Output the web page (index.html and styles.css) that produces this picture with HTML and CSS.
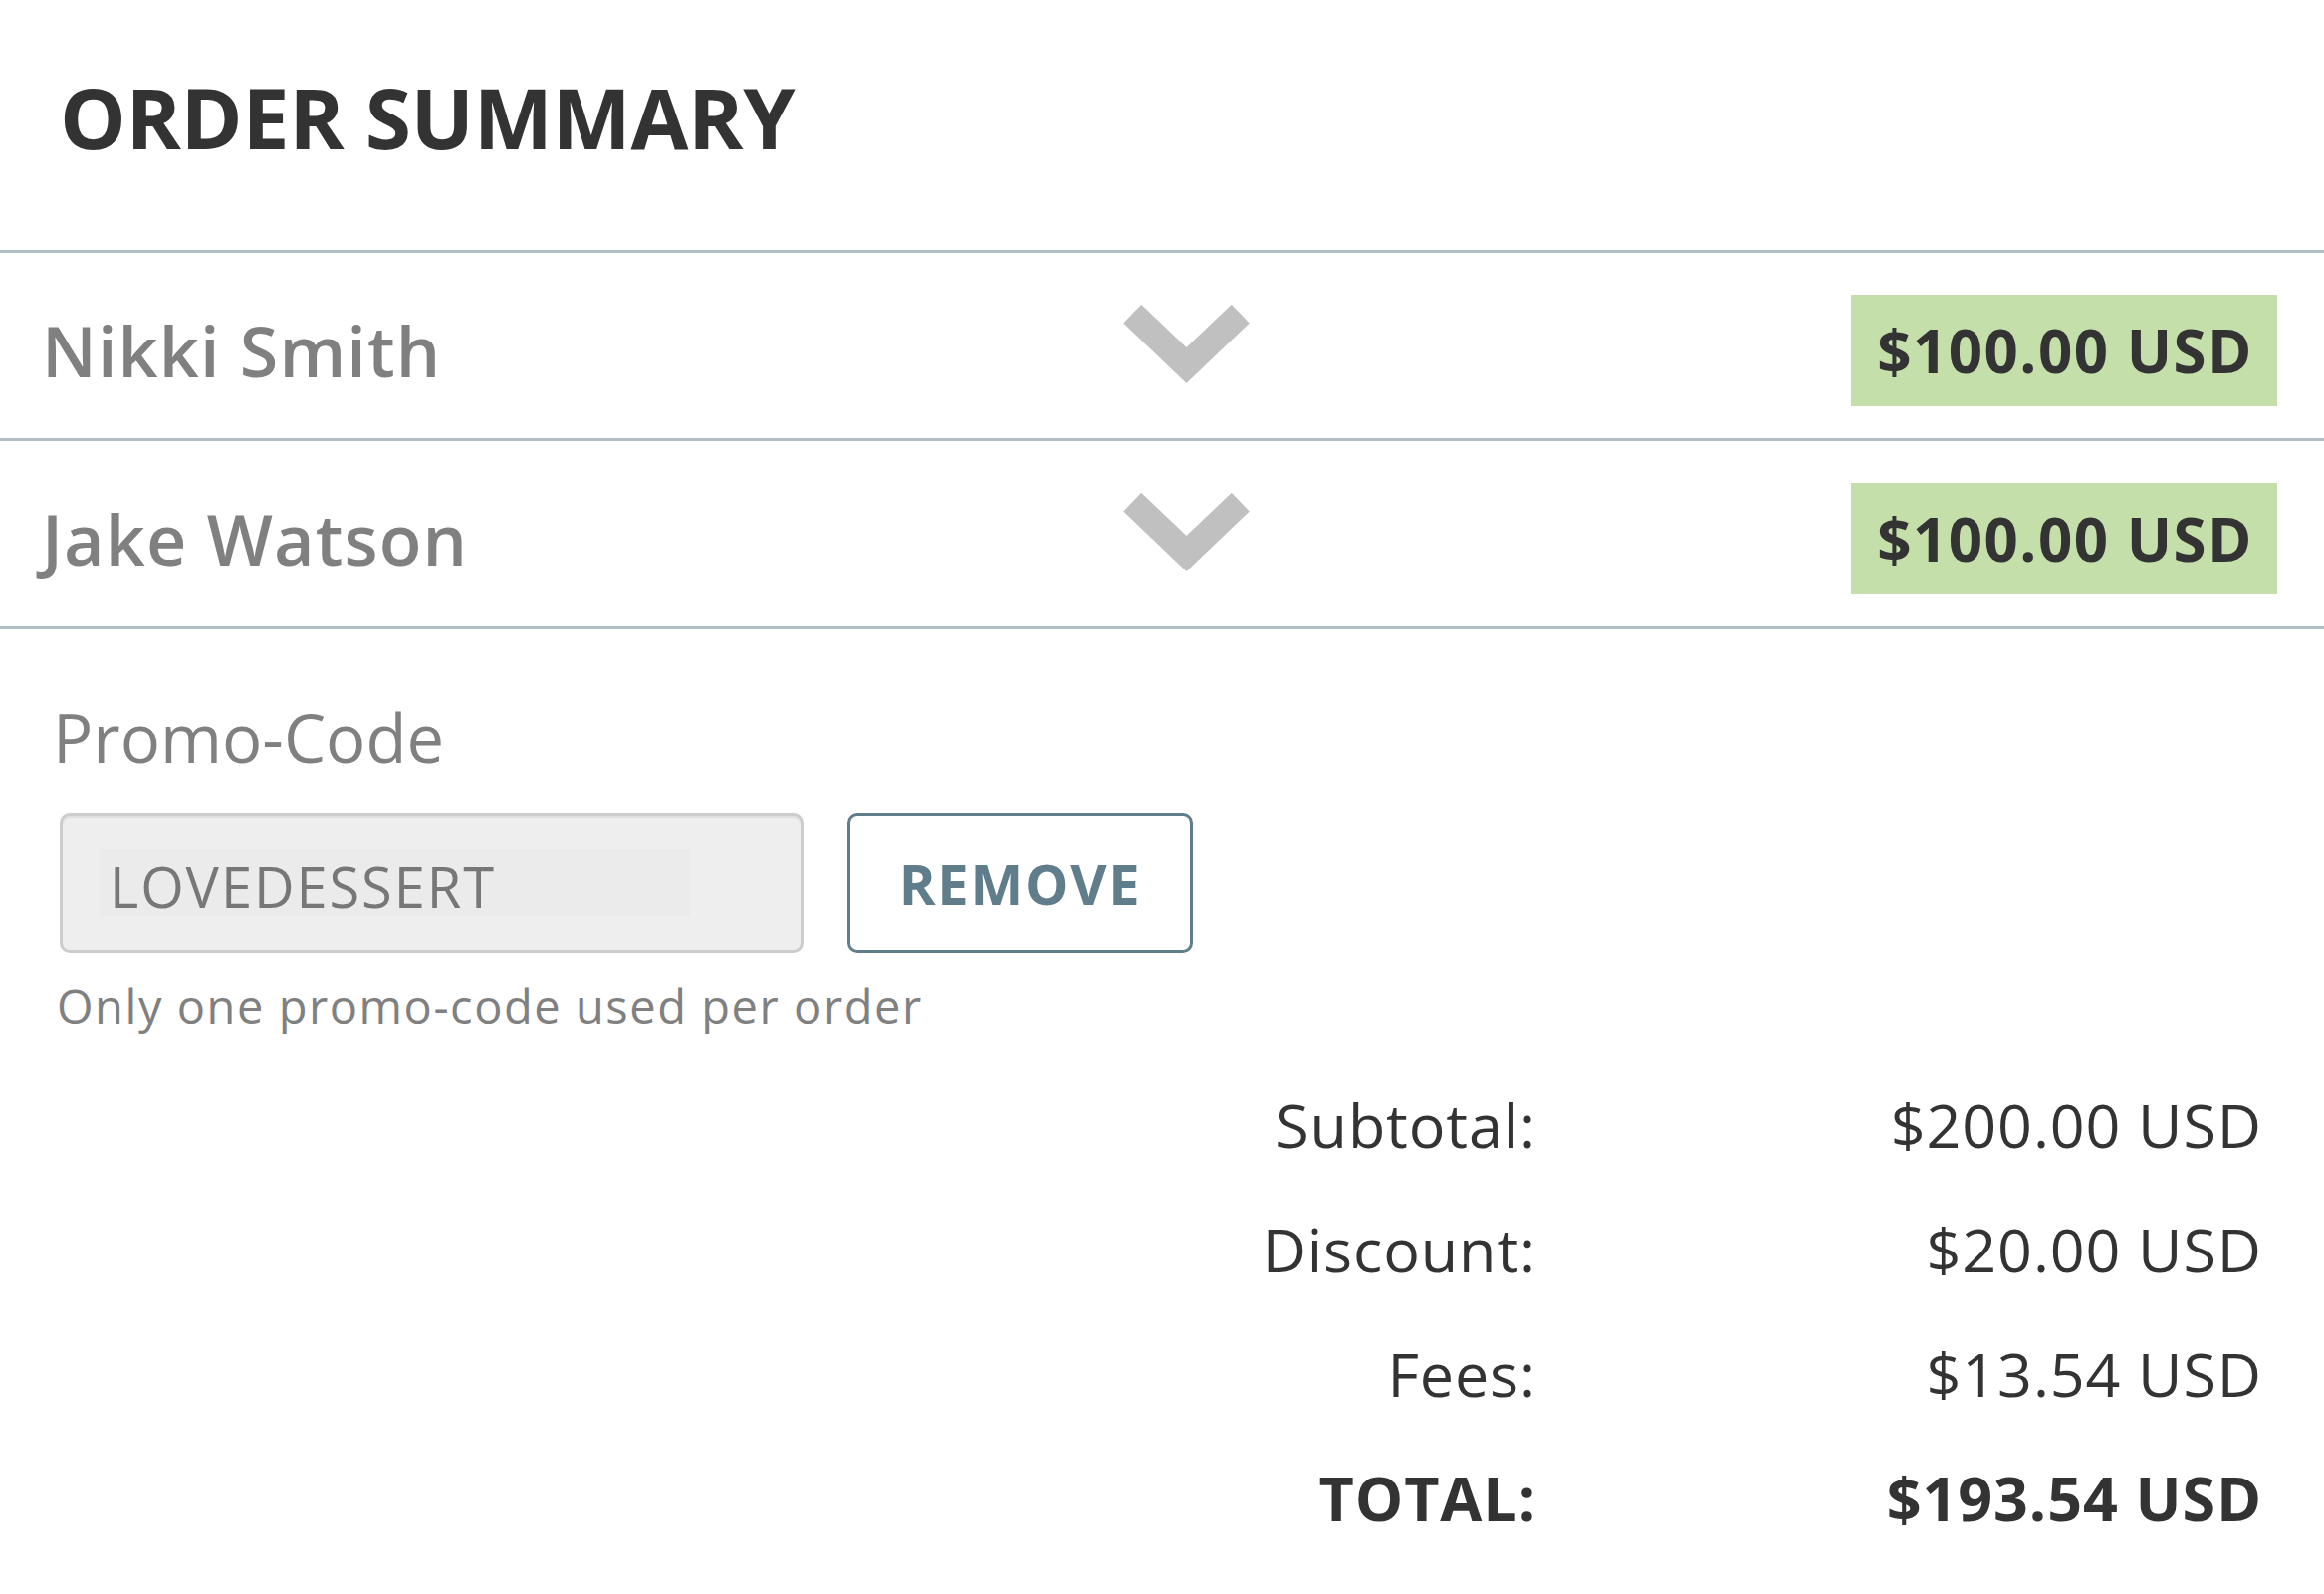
FILE: index.html
```
<!DOCTYPE html>
<html lang="en">
<head>
    <meta charset="UTF-8">
    <title>Order Summary</title>
    <link rel="stylesheet" href="styles.css">
</head>
<body>
<header class="summary-header">
    <h1>ORDER SUMMARY</h1>
</header>

<section class="attendees">
    <div class="attendee">
        <span class="attendee-name">Nikki Smith</span>
        <svg class="chevron" viewBox="0 0 127 80" width="127" height="80">
            <polyline points="9.2,9.2 63.5,61 117.8,9.2"></polyline>
        </svg>
        <span class="price-tag">$100.00 USD</span>
    </div>
    <div class="attendee">
        <span class="attendee-name">Jake Watson</span>
        <svg class="chevron" viewBox="0 0 127 80" width="127" height="80">
            <polyline points="9.2,9.2 63.5,61 117.8,9.2"></polyline>
        </svg>
        <span class="price-tag">$100.00 USD</span>
    </div>
</section>

<section class="promo">
    <label class="promo-label" for="promoInput">Promo-Code</label>
    <div class="promo-row">
        <div class="promo-field">
            <input type="text" id="promoInput" value="LOVEDESSERT" readonly>
        </div>
        <button class="remove-button">REMOVE</button>
    </div>
    <p class="promo-note">Only one promo-code used per order</p>
</section>

<section class="totals">
    <span class="totals-label">Subtotal:</span>
    <span class="totals-value">$200.00 USD</span>
    <span class="totals-label">Discount:</span>
    <span class="totals-value">$20.00 USD</span>
    <span class="totals-label">Fees:</span>
    <span class="totals-value">$13.54 USD</span>
    <span class="totals-label total">TOTAL:</span>
    <span class="totals-value total">$193.54 USD</span>
</section>
</body>
</html>
```

FILE: styles.css
```
body {
    margin: 0;
    padding: 0;
    background-color: #fff;
    font-family: "Open Sans", "Liberation Sans", sans-serif;
    color: #333;
}

.summary-header {
    padding: 60px 58px 76px 60px;
    border-bottom: 3px solid #b0bec5;
}

.summary-header h1 {
    margin: 0;
    font-size: 84px;
    font-weight: 700;
    line-height: normal;
    letter-spacing: -0.35px;
    color: #333;
}

.attendee {
    display: grid;
    grid-template-columns: 1086px 127px 1fr;
    align-items: center;
    padding: 42px 47px 32px 42px;
    border-bottom: 3px solid #b0bec5;
}

.attendee-name {
    font-size: 70px;
    font-weight: 600;
    letter-spacing: 1.1px;
    color: #808080;
}

.chevron {
    display: block;
    margin-bottom: 12px;
}

.chevron polyline {
    fill: none;
    stroke: #c0c0c0;
    stroke-width: 26;
    stroke-linejoin: miter;
}

.price-tag {
    justify-self: end;
    height: 112px;
    line-height: 112px;
    padding: 0 24px 0 26px;
    background-color: #c5dfab;
    font-size: 60px;
    font-weight: 700;
    letter-spacing: 1.5px;
    color: #333;
}

.promo {
    padding: 62px 0 0 53px;
}

.promo-label {
    display: block;
    font-size: 67px;
    line-height: normal;
    color: #808080;
}

.promo-row {
    display: flex;
    align-items: center;
    margin-top: 31px;
    padding-left: 7px;
}

.promo-field {
    box-sizing: border-box;
    width: 747px;
    height: 140px;
    padding: 33px 0 0 37px;
    background-color: #eee;
    border: 3px solid #ccc;
    border-radius: 10px;
    box-shadow: inset 0 2px 1px rgba(0, 0, 0, 0.06);
}

.promo-field input {
    box-sizing: border-box;
    width: 593px;
    height: 67px;
    padding: 6px 0 0 10px;
    border: none;
    outline: none;
    background-color: #ebebeb;
    font-family: inherit;
    font-size: 56px;
    letter-spacing: 1.9px;
    color: #777;
}

.remove-button {
    box-sizing: border-box;
    width: 347px;
    height: 140px;
    margin-left: 44px;
    padding: 0;
    background-color: #fff;
    border: 3px solid #607d8b;
    border-radius: 10px;
    font-family: inherit;
    font-size: 56px;
    font-weight: 700;
    letter-spacing: 1.7px;
    color: #607d8b;
    cursor: pointer;
}

.promo-note {
    margin: 21px 0 0 4px;
    font-size: 47px;
    line-height: normal;
    letter-spacing: 1.55px;
    color: #808080;
}

.totals {
    display: grid;
    grid-template-columns: 1fr 729px;
    margin-top: 25px;
    padding-right: 62px;
    font-size: 61px;
    line-height: 125px;
    letter-spacing: 0.9px;
    color: #333;
}

.totals-label,
.totals-value {
    text-align: right;
}

.total {
    font-weight: 700;
}
```
